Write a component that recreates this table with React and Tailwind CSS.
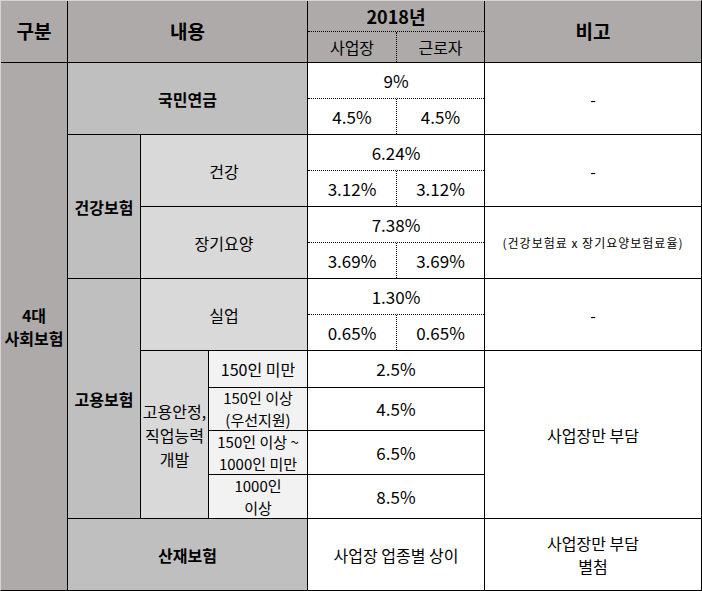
const head = 'bg-[#aeaaaa]'
const label = 'bg-[#bfbfbf]'
const sub = 'bg-[#d9d9d9]'
const tier = 'bg-[#f2f2f2]'

function Cell({ className = '', children }) {
  return (
    <div className={`flex items-center justify-center text-center ${className}`}>
      {children}
    </div>
  )
}

// merged rate cell: total on top, employer | employee below
function Split({ total, a, b, className = '' }) {
  return (
    <div className={`flex flex-col bg-white text-[17px] ${className}`}>
      <div className="h-[36px] flex items-center justify-center border-b border-dotted border-black">
        {total}
      </div>
      <div className="flex flex-1">
        <div className="w-[89px] flex items-center justify-center border-r border-dotted border-black">{a}</div>
        <div className="flex-1 flex items-center justify-center">{b}</div>
      </div>
    </div>
  )
}

export default function App() {
  return (
    <div className="w-[702px] h-[591px] bg-white font-['Noto_Sans_CJK_KR',sans-serif] text-[16px] text-black">
      <div className="grid w-[702px] h-[591px] gap-px bg-black border-t border-l border-t-[#d4d4d4] border-l-[#d4d4d4] border-r border-b border-r-black border-b-black grid-cols-[66px_72px_67px_98px_176px_216px] grid-rows-[61px_71px_71px_71px_71px_36px_42px_43px_43px_71px]">
        {/* header */}
        <Cell className={`${head} col-start-1 row-start-1 text-[19px] font-bold`}>구분</Cell>
        <Cell className={`${head} col-start-2 col-span-3 row-start-1 text-[19px] font-bold`}>내용</Cell>
        <div className={`${head} col-start-5 row-start-1 flex flex-col`}>
          <div className="h-[31px] flex items-center justify-center border-b border-dotted border-black text-[18px] font-bold">
            2018년
          </div>
          <div className="flex flex-1">
            <div className="w-[89px] flex items-center justify-center border-r border-dotted border-black">사업장</div>
            <div className="flex-1 flex items-center justify-center">근로자</div>
          </div>
        </div>
        <Cell className={`${head} col-start-6 row-start-1 text-[19px] font-bold`}>비고</Cell>

        {/* 4대 사회보험 */}
        <Cell className={`${head} col-start-1 row-start-2 row-span-9 font-bold leading-[23px]`}>
          4대<br />사회보험
        </Cell>

        <Cell className={`${label} col-start-2 col-span-3 row-start-2 font-bold`}>국민연금</Cell>
        <Split className="col-start-5 row-start-2" total="9%" a="4.5%" b="4.5%" />
        <Cell className="bg-white col-start-6 row-start-2">-</Cell>

        <Cell className={`${label} col-start-2 row-start-3 row-span-2 font-bold`}>건강보험</Cell>
        <Cell className={`${sub} col-start-3 col-span-2 row-start-3`}>건강</Cell>
        <Split className="col-start-5 row-start-3" total="6.24%" a="3.12%" b="3.12%" />
        <Cell className="bg-white col-start-6 row-start-3">-</Cell>

        <Cell className={`${sub} col-start-3 col-span-2 row-start-4`}>장기요양</Cell>
        <Split className="col-start-5 row-start-4" total="7.38%" a="3.69%" b="3.69%" />
        <Cell className="bg-white col-start-6 row-start-4 text-[12px] tracking-[1px]">(건강보험료 x 장기요양보험료율)</Cell>

        <Cell className={`${label} col-start-2 row-start-5 row-span-5 font-bold`}>고용보험</Cell>
        <Cell className={`${sub} col-start-3 col-span-2 row-start-5`}>실업</Cell>
        <Split className="col-start-5 row-start-5" total="1.30%" a="0.65%" b="0.65%" />
        <Cell className="bg-white col-start-6 row-start-5">-</Cell>

        <Cell className={`${sub} col-start-3 row-start-6 row-span-4 leading-[24px]`}>
          고용안정,<br />직업능력<br />개발
        </Cell>
        <Cell className={`${tier} col-start-4 row-start-6`}>150인 미만</Cell>
        <Cell className="bg-white col-start-5 row-start-6 text-[17px]">2.5%</Cell>
        <Cell className={`${tier} col-start-4 row-start-7 text-[15px] leading-[22px]`}>
          150인 이상<br />(우선지원)
        </Cell>
        <Cell className="bg-white col-start-5 row-start-7 text-[17px]">4.5%</Cell>
        <Cell className={`${tier} col-start-4 row-start-8 text-[15px] leading-[22px] whitespace-nowrap`}>
          150인 이상 ~<br />1000인 미만
        </Cell>
        <Cell className="bg-white col-start-5 row-start-8 text-[17px]">6.5%</Cell>
        <Cell className={`${tier} col-start-4 row-start-9 text-[15px] leading-[22px]`}>
          1000인<br />이상
        </Cell>
        <Cell className="bg-white col-start-5 row-start-9 text-[17px]">8.5%</Cell>
        <Cell className="bg-white col-start-6 row-start-6 row-span-4">사업장만 부담</Cell>

        {/* 산재보험 */}
        <Cell className={`${label} col-start-2 col-span-3 row-start-10 font-bold`}>산재보험</Cell>
        <Cell className="bg-white col-start-5 row-start-10">사업장 업종별 상이</Cell>
        <Cell className="bg-white col-start-6 row-start-10 leading-[23px]">
          사업장만 부담<br />별첨
        </Cell>
      </div>
    </div>
  )
}
